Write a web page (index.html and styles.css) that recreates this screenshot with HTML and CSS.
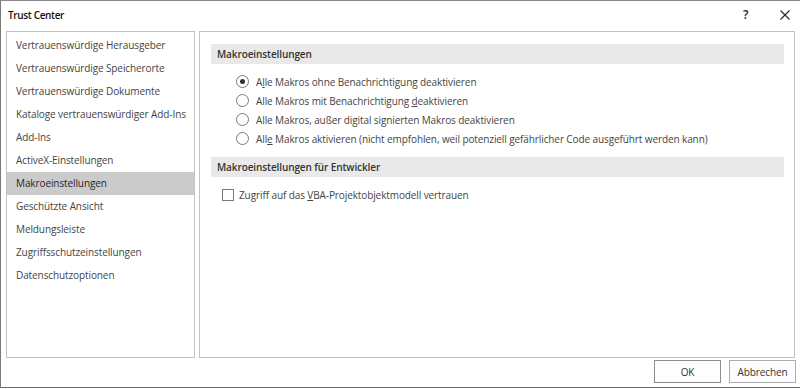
FILE: index.html
```html
<!DOCTYPE html>
<html lang="de">
<head>
<meta charset="utf-8">
<title>Trust Center</title>
<link rel="stylesheet" href="styles.css">
</head>
<body>
<div class="window">
  <div class="titlebar">
    <span class="title">Trust Center</span>
    <span class="help">?</span>
    <span class="close"><svg width="10" height="10" viewBox="0 0 10 10"><path d="M0.5 0.5 L9.5 9.5 M9.5 0.5 L0.5 9.5" stroke="#222" stroke-width="1.1" fill="none"/></svg></span>
  </div>
  <div class="main">
    <ul class="nav">
      <li class="nav-item">Vertrauenswürdige Herausgeber</li>
      <li class="nav-item">Vertrauenswürdige Speicherorte</li>
      <li class="nav-item">Vertrauenswürdige Dokumente</li>
      <li class="nav-item">Kataloge vertrauenswürdiger Add-Ins</li>
      <li class="nav-item">Add-Ins</li>
      <li class="nav-item">ActiveX-Einstellungen</li>
      <li class="nav-item selected">Makroeinstellungen</li>
      <li class="nav-item">Geschützte Ansicht</li>
      <li class="nav-item">Meldungsleiste</li>
      <li class="nav-item">Zugriffsschutzeinstellungen</li>
      <li class="nav-item">Datenschutzoptionen</li>
    </ul>
    <div class="content">
      <div class="section-head">Makroeinstellungen</div>
      <div class="options">
        <div class="opt"><span class="radio checked"></span><span>A<u>l</u>le Makros ohne Benachrichtigung deaktivieren</span></div>
        <div class="opt"><span class="radio"></span><span>Alle Makros mit Benachrichtigung <u>d</u>eaktivieren</span></div>
        <div class="opt"><span class="radio"></span><span>Alle Makros, außer digital signierten Makros deaktivieren</span></div>
        <div class="opt"><span class="radio"></span><span>All<u>e</u> Makros aktivieren (nicht empfohlen, weil potenziell gefährlicher Code ausgeführt werden kann)</span></div>
      </div>
      <div class="section-head second">Makroeinstellungen für Entwickler</div>
      <div class="checks">
        <div class="opt"><span class="checkbox"></span><span>Zugriff auf das <u>V</u>BA-Projektobjektmodell vertrauen</span></div>
      </div>
    </div>
  </div>
  <div class="footer">
    <button class="btn default">OK</button>
    <button class="btn">Abbrechen</button>
  </div>
</div>
</body>
</html>
```

FILE: styles.css
```css
html, body {
  margin: 0;
  padding: 0;
  background: #ffffff;
}
body {
  width: 800px;
  height: 389px;
  overflow: hidden;
  font-family: "Open Sans", "Noto Sans", sans-serif;
  font-size: 10px;
  letter-spacing: -0.1px;
  color: #444444;
}
.window {
  box-sizing: border-box;
  width: 800px;
  height: 388px;
  border-left: 1px solid #7a7a7a;
  border-top: 1px solid #8a8a8a;
  border-bottom: 1px solid #6a6a6a;
  display: flex;
  flex-direction: column;
  background: #ffffff;
}
.titlebar {
  height: 30px;
  flex: none;
  display: flex;
  align-items: center;
  padding-left: 7px;
}
.title {
  font-size: 10px;
  font-weight: 600;
  letter-spacing: -0.35px;
  color: #111111;
  flex: 1;
  padding-bottom: 3px;
}
.help {
  font-size: 12px;
  font-weight: 600;
  color: #222222;
  width: 37px;
  padding-bottom: 3px;
}
.close {
  width: 20px;
  display: flex;
  align-items: center;
  padding-bottom: 3px;
}
.main {
  height: 327px;
  flex: none;
  display: flex;
  gap: 4px;
  padding-left: 5px;
}
.nav {
  box-sizing: border-box;
  width: 189px;
  height: 327px;
  margin: 0;
  padding: 2px 0 0 0;
  list-style: none;
  border: 1px solid #c2c2c2;
}
.nav-item {
  height: 23px;
  line-height: 23px;
  padding-left: 9px;
  white-space: nowrap;
  color: #444444;
}
.nav-item.selected {
  background: #cbcbcb;
  color: #262626;
}
.content {
  box-sizing: border-box;
  width: 596px;
  height: 327px;
  border: 1px solid #c2c2c2;
  padding: 12px 10px 0 11px;
}
.section-head {
  height: 20px;
  line-height: 20px;
  background: #e9e9e9;
  padding-left: 6px;
  font-weight: 600;
  color: #333333;
}
.section-head.second {
  margin-top: 9px;
}
.options {
  margin-top: 8px;
  padding-left: 25px;
}
.checks {
  margin-top: 8px;
  padding-left: 11px;
}
.opt {
  height: 19px;
  display: flex;
  align-items: center;
  white-space: nowrap;
  color: #444444;
}
.opt u {
  text-decoration-thickness: 1px;
  text-underline-offset: 1px;
}
.radio {
  box-sizing: border-box;
  width: 13px;
  height: 13px;
  border: 1px solid #7a7a7a;
  border-radius: 50%;
  margin-right: 7px;
  flex: none;
  display: flex;
  align-items: center;
  justify-content: center;
}
.radio.checked::after {
  content: "";
  width: 5px;
  height: 5px;
  border-radius: 50%;
  background: #333333;
}
.checkbox {
  box-sizing: border-box;
  width: 12px;
  height: 12px;
  border: 1px solid #7a7a7a;
  margin-right: 5px;
  flex: none;
}
.footer {
  flex: 1;
  display: flex;
  justify-content: flex-end;
  align-items: flex-start;
  gap: 8px;
  padding: 2px 4px 0 0;
}
.btn {
  box-sizing: border-box;
  width: 67px;
  height: 23px;
  border: 1px solid #adadad;
  background: #fdfdfd;
  font-family: "Open Sans", "Noto Sans", sans-serif;
  font-size: 10px;
  letter-spacing: -0.1px;
  color: #333333;
  padding: 0;
}
.btn.default {
  border-color: #8c8c8c;
}
```
